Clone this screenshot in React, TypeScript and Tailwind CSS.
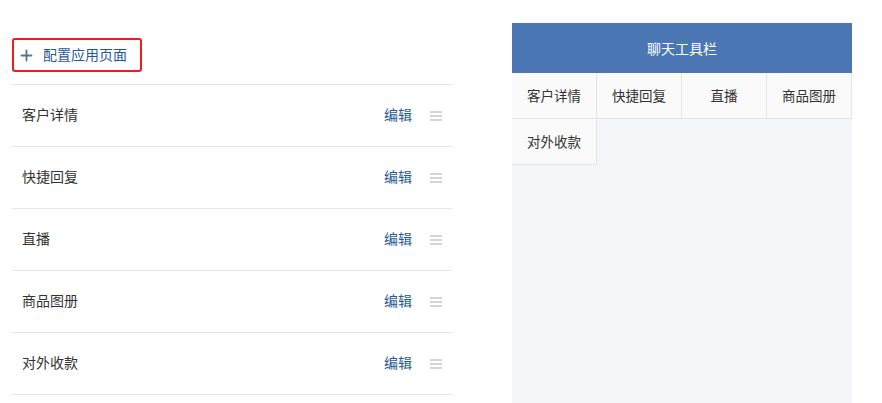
import { Plus } from "lucide-react";

const apps = ["客户详情", "快捷回复", "直播", "商品图册", "对外收款"];

function DragHandle() {
  return (
    <div className="flex flex-col gap-[2px] w-3">
      <span className="h-[2px] bg-[#d4d4d4]" />
      <span className="h-[2px] bg-[#d4d4d4]" />
      <span className="h-[2px] bg-[#d4d4d4]" />
    </div>
  );
}

export default function App() {
  return (
    <div
      className="flex h-[403px] w-[882px] overflow-hidden bg-white pl-3 text-[#333]"
      style={{ fontFamily: '"Noto Sans CJK SC", "Noto Sans", sans-serif' }}
    >
      {/* left: app list */}
      <section className="w-[440px] shrink-0">
        <div className="h-[84px] pt-[38px]">
          <button className="flex h-[34px] w-[130px] items-center gap-[8px] rounded-[3px] border-2 border-[#f21b1b] pb-[3px] pl-[4px] text-[14px] leading-none text-[#1f5a96]">
            <Plus className="mt-[3px] h-[17px] w-[17px] text-[#5a7390]" strokeWidth={2.6} />
            配置应用页面
          </button>
        </div>
        <ul className="border-t border-[#e6e6e6]">
          {apps.map((name) => (
            <li
              key={name}
              className="flex h-[62px] items-center border-b border-[#e6e6e6] pb-[3px] pl-[10px] pr-[10px]"
            >
              <span className="flex-1 text-[14px] leading-none">{name}</span>
              <a className="mr-[18px] text-[14px] leading-none text-[#1f5a96]">
                编辑
              </a>
              <div className="mt-[3px]">
                <DragHandle />
              </div>
            </li>
          ))}
        </ul>
      </section>

      {/* right: preview */}
      <section className="ml-[60px] mt-[23px] flex w-[340px] shrink-0 flex-col bg-[#f5f6fa]">
        <div className="flex h-[50px] items-center justify-center bg-[#4a77b4] text-[14px] text-white">
          聊天工具栏
        </div>
        <div className="grid grid-cols-4">
          {apps.map((name) => (
            <div
              key={name}
              className="flex h-[46px] items-center justify-center border-b border-r border-[#e4e4e4] bg-[#fafafa] text-[13.5px]"
            >
              {name}
            </div>
          ))}
        </div>
      </section>
    </div>
  );
}
